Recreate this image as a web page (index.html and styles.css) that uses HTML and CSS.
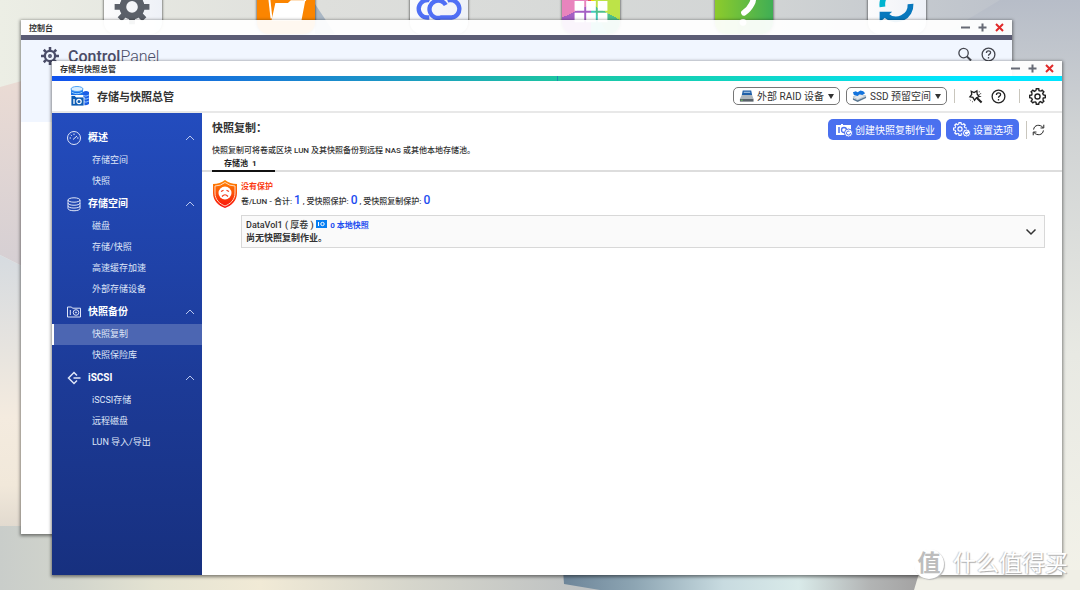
FILE: index.html
```html
<!DOCTYPE html>
<html lang="zh-CN">
<head>
<meta charset="utf-8">
<title>存储与快照总管</title>
<link rel="stylesheet" href="styles.css">
</head>
<body>
<svg class="defs" aria-hidden="true">
  <defs>
    <path id="tooth" d="M-2.1-8.3L-1.7-11H1.7L2.1-8.3A8.5 8.5 0 0 1 4.4-7.3"/>
    <g id="teeth4"><use href="#tooth"/><use href="#tooth" transform="rotate(45)"/><use href="#tooth" transform="rotate(90)"/><use href="#tooth" transform="rotate(135)"/></g>
    <symbol id="gear-line" viewBox="-12 -12 24 24"><use href="#teeth4"/><use href="#teeth4" transform="rotate(180)"/><circle r="3.6"/></symbol>
    <symbol id="gear-solid" viewBox="-12 -12 24 24">
      <circle r="6.8" stroke-width="3"/>
      <path stroke-width="3.4" d="M0-12V-8M0 12V8M-12 0H-8M12 0H8M-8.3-8.3L-5.500-5.500M8.3 8.3L5.500 5.500M-8.3 8.3L-5.500 5.500M8.3-8.3L5.500-5.500"/>
      <circle r="1.6" stroke-width="2"/>
    </symbol>
    <symbol id="help" viewBox="0 0 16 16"><circle cx="8" cy="8" r="6.8"/><path d="M5.8 6.3C5.8 3.4 10.3 3.5 10.2 6.1C10.1 7.7 8 7.6 8 9.4M8 10.6V12.2"/></symbol>
    <symbol id="chev-up" viewBox="0 0 10 6"><path d="M1 5L5 1L9 5"/></symbol>
    <symbol id="min" viewBox="0 0 9 9"><path d="M0 4.5H9"/></symbol>
    <symbol id="max" viewBox="0 0 9 9"><path d="M.5 4.5H8.5M4.5 .5V8.5"/></symbol>
    <symbol id="close" viewBox="0 0 9 9"><path d="M1 1L8 8M8 1L1 8"/></symbol>
    <linearGradient id="pink" x2="0" y2="1"><stop stop-color="#ecdcd4"/><stop offset="1" stop-color="#d2cdd3"/></linearGradient>
    <linearGradient id="cream" x2="0" y2="1"><stop stop-color="#d6dbe0"/><stop offset=".35" stop-color="#e7e4df"/><stop offset=".6" stop-color="#f4ebdf"/><stop offset=".85" stop-color="#f1e8da"/><stop offset="1" stop-color="#e2dacf"/></linearGradient>
    <linearGradient id="floor"><stop stop-color="#c9cdca"/><stop offset=".12" stop-color="#d2d5cc"/><stop offset=".25" stop-color="#e4e3d2"/><stop offset=".42" stop-color="#f1ead6"/><stop offset=".66" stop-color="#d6d6cc"/><stop offset="1" stop-color="#b9bdc0"/></linearGradient>
    <linearGradient id="glass"><stop stop-color="#6d8599"/><stop offset=".2" stop-color="#8da5b3"/><stop offset=".45" stop-color="#c8dbe0"/><stop offset=".66" stop-color="#d9eae9"/><stop offset=".86" stop-color="#b2b4b4"/><stop offset="1" stop-color="#a3a2a2"/></linearGradient>
    <linearGradient id="side" x2="0" y2="1"><stop stop-color="#b7bdc8"/><stop offset=".22" stop-color="#d0d3d4"/><stop offset=".6" stop-color="#e8e9e3"/><stop offset="1" stop-color="#f3f2e9"/></linearGradient>
    <linearGradient id="top"><stop stop-color="#eceee5"/><stop offset=".3" stop-color="#dedfdc"/><stop offset=".7" stop-color="#d2d5d5"/><stop offset="1" stop-color="#b7bdc8"/></linearGradient>
    <linearGradient id="shield" x2="0" y2="1"><stop stop-color="#ff8a00"/><stop offset="1" stop-color="#f90f0f"/></linearGradient>
  </defs>
</svg>

<main class="desktop">
  <svg class="wallpaper" viewBox="0 0 1080 590" preserveAspectRatio="none" aria-hidden="true">
    <rect width="1080" height="590" fill="url(#top)"/>
    <path fill="url(#side)" d="M1000 0H1080V590H900V60Z"/>
    <path fill="url(#pink)" d="M0 87L90 62V300L0 255Z"/>
    <path fill="url(#cream)" d="M0 255L90 300V526H0Z"/>
    <path fill="url(#floor)" d="M0 526H620V590H0Z"/>
    <path fill="#f0efe6" d="M900 570H1080V590H900Z"/>
    <path fill="url(#glass)" d="M563 570H920L914 590H600L564 584Z"/>
    <path fill="#a9b7c5" d="M315 4L335 34H315Z"/>
  </svg>

  <nav class="apps" aria-label="桌面">
    <a class="app app-light" href="#" aria-label="控制台"><svg viewBox="0 0 60 60"><g transform="translate(29 33)" fill="none" stroke="#5b6069"><circle r="9.500" stroke-width="7"/><path stroke-width="6" d="M0-18V-12M0 18V12M-18 0H-12M18 0H12M-12.700-12.700L-8-8M12.700 12.700L8 8M-12.700 12.700L-8 8M12.700-12.700L8-8"/></g></svg></a>
    <a class="app app-orange" href="#" aria-label="文件"><svg viewBox="0 0 60 60"><path fill="none" stroke="#fff" stroke-width="2" d="M12 18L15 45"/><path fill="#fff" d="M19 29H32L35 26H50L46 47H15Z"/><path fill="none" stroke="#fff" stroke-width="2" d="M22 22H48L50 27"/></svg></a>
    <a class="app app-light" href="#" aria-label="云"><svg viewBox="0 0 60 60"><path fill="none" stroke="#4f6ff5" stroke-width="4.500" d="M20 44H18A9 9 0 0 1 18 26C22 18 38 18 41 26A9 9 0 0 1 43 44H32A9 9 0 1 1 37 31"/></svg></a>
    <a class="app app-prism" href="#" aria-label="应用"><svg viewBox="0 0 60 60"><path fill="#fff" d="M13 15H23V25H13ZM25 15H35V25H25ZM37 15H47V25H37ZM13 27H23V37H13ZM25 27H35V37H25ZM37 27H47V37H37ZM13 39H23V49H13ZM25 39H35V49H25ZM37 39H47V49H37Z"/></svg></a>
    <a class="app app-green" href="#" aria-label="帮助"><svg viewBox="0 0 60 60"><path fill="none" stroke="#fff" stroke-width="6" stroke-linecap="round" d="M22 18C30 8 44 20 38 30Q35 36 30 39"/><circle cx="29" cy="49" r="3.500" fill="#fff"/></svg></a>
    <a class="app app-light" href="#" aria-label="同步"><svg viewBox="0 0 60 60"><path fill="none" stroke="#00b4d0" stroke-width="6" d="M15 33A15 15 0 0 1 38 18"/><path fill="none" stroke="#0878bd" stroke-width="6" d="M44 30A15 15 0 0 1 19 42"/><path fill="#0878bd" d="M12 38H25L12 49Z"/></svg></a>
  </nav>

  <section class="window window-back" aria-label="控制台">
    <header class="titlebar"><span>控制台</span>
      <div class="win-btns">
        <button type="button" aria-label="最小化"><svg><use href="#min"/></svg></button>
        <button type="button" aria-label="最大化"><svg><use href="#max"/></svg></button>
        <button type="button" class="x" aria-label="关闭"><svg><use href="#close"/></svg></button>
      </div>
    </header>
    <div class="strip strip-dark"></div>
    <div class="cp-head">
      <svg class="cp-gear"><use href="#gear-solid"/></svg>
      <h1 class="cp-title"><b>Control</b>Panel</h1>
      <button type="button" class="tool" aria-label="搜索"><svg viewBox="0 0 16 16"><circle cx="7" cy="6.500" r="5"/><path d="M10.500 10L15 14.500" stroke-width="2.200"/></svg></button>
      <button type="button" class="tool" aria-label="帮助"><svg><use href="#help"/></svg></button>
    </div>
  </section>

  <section class="window window-front" aria-label="存储与快照总管">
    <header class="titlebar"><span>存储与快照总管</span>
      <div class="win-btns">
        <button type="button" aria-label="最小化"><svg><use href="#min"/></svg></button>
        <button type="button" aria-label="最大化"><svg><use href="#max"/></svg></button>
        <button type="button" class="x" aria-label="关闭"><svg><use href="#close"/></svg></button>
      </div>
    </header>
    <div class="strip strip-a"><i class="tick"></i></div>
    <div class="app-head">
      <svg class="logo" viewBox="0 0 20 20" aria-hidden="true">
        <path fill="#1d5fe6" d="M13 6Q16 4 19 6V18Q16 20 13 19Z"/><path stroke="#8fc2ff" fill="none" d="M13 9.500Q16 11 19 9M13 12.500Q16 14 19 12M13 15.500Q16 17 19 15"/>
        <path fill="#1c73e8" d="M1 3V9H13V3Z"/><ellipse cx="7" cy="3" rx="6" ry="2.500" fill="#d8edff" stroke="#4da3f5"/><path d="M1.500 6Q7 9.500 12.500 6" fill="none" stroke="#8fd0ff"/>
        <path fill="#0c5cb4" stroke="#fff" stroke-width=".8" d="M1 11V9.500H5L6 11H14V20H1Z"/><path stroke="#fff" stroke-width="1.300" d="M4 13V18"/><circle cx="9" cy="15.500" r="2.200" fill="none" stroke="#fff" stroke-width="1.200"/>
      </svg>
      <h2 class="app-name">存储与快照总管</h2>
      <div class="drop">
        <svg viewBox="0 0 16 14" aria-hidden="true"><path fill="#1f5fa8" d="M4 1H13L14 6H3Z"/><path stroke="#c8dcf2" d="M5 3H12"/><path fill="#aeb6bd" d="M3 6H14L15.500 10H1Z"/><path fill="#59626a" d="M1 10H15.500V13H1Z"/><path stroke="#6fce5c" d="M2 11.500H4"/></svg>
        <select aria-label="外部 RAID 设备"><option>外部 RAID 设备</option></select>
      </div>
      <div class="drop">
        <svg viewBox="0 0 16 14" aria-hidden="true"><path fill="#e3e8ec" stroke="#98a5b0" stroke-width=".6" d="M1 8L9 5L15 7L6 11Z"/><path fill="#5b7892" d="M1 9L6 11.500L15 7.500V9L6 13.500L1 11Z"/><path fill="#1474dd" d="M1 3L4 2L6 3L9 1L12 2L14 4L11 6L8 5L6 7L2 6Z"/></svg>
        <select aria-label="SSD 预留空间"><option>SSD 预留空间</option></select>
      </div>
      <i class="vsep"></i>
      <button type="button" class="tool tool-wand" aria-label="向导"><svg viewBox="0 0 16 16"><path d="M3.500 2.500L6.500 3.800L9.500 2L9.800 5.500L12 8L9 9.300L7 12L5.200 9L2 8.300L4 5.700Z"/><path d="M9 9L14.500 14.500" stroke-width="2.200"/><path stroke-dasharray="1 2" stroke-width="1" d="M12 2.500V7M2 11.500L6 14.500M13.500 4.500V10"/></svg></button>
      <button type="button" class="tool" aria-label="帮助"><svg><use href="#help"/></svg></button>
      <i class="vsep vsep-wide"></i>
      <button type="button" class="tool tool-gear" aria-label="设置"><svg><use href="#gear-line"/></svg></button>
    </div>

    <div class="body">
      <nav class="sidebar" aria-label="导航">
        <button type="button" class="group"><svg viewBox="0 0 16 16"><circle cx="8" cy="8" r="6.500"/><path d="M7 9.500L11 6M3.500 8H5M8 3.500V5M4.800 4.800L5.800 5.800M11 8H12.500"/></svg><span>概述</span><svg class="up"><use href="#chev-up"/></svg></button>
        <a href="#">存储空间</a>
        <a href="#">快照</a>
        <button type="button" class="group"><svg viewBox="0 0 16 16"><ellipse cx="8" cy="4" rx="6" ry="2.200"/><path d="M2 4V12.500C2 15.500 14 15.500 14 12.500V4M2 7C2 10 14 10 14 7M2 9.800C2 12.800 14 12.800 14 9.800"/></svg><span>存储空间</span><svg class="up"><use href="#chev-up"/></svg></button>
        <a href="#">磁盘</a>
        <a href="#">存储/快照</a>
        <a href="#">高速缓存加速</a>
        <a href="#">外部存储设备</a>
        <button type="button" class="group"><svg viewBox="0 0 16 16"><path d="M1.500 3H5.500L6.500 4.200H14.500V13H1.500ZM4.300 6V11"/><circle cx="10" cy="8.500" r="2.800"/><circle cx="10" cy="8.500" r=".6"/></svg><span>快照备份</span><svg class="up"><use href="#chev-up"/></svg></button>
        <a href="#" class="active" aria-current="page">快照复制</a>
        <a href="#">快照保险库</a>
        <button type="button" class="group"><svg viewBox="0 0 16 16"><path stroke-width="1.500" d="M11 5.500L8 2.500L2.500 8L8 13.500L11 10.500M7.500 8H14.500"/></svg><span>iSCSI</span><svg class="up"><use href="#chev-up"/></svg></button>
        <a href="#">iSCSI存储</a>
        <a href="#">远程磁盘</a>
        <a href="#">LUN 导入/导出</a>
      </nav>

      <div class="content">
        <div class="bar">
          <h3 class="heading">快照复制：</h3>
          <button type="button" class="primary"><svg viewBox="0 0 18 16"><path fill="#fff" d="M1 3H6V2H8V3H16V13H1Z"/><path stroke="#4a70ef" stroke-width="1.500" d="M4 5V11"/><circle cx="9" cy="8" r="2.500" fill="none" stroke="#4a70ef" stroke-width="1.300"/><circle cx="13.500" cy="11" r="4" fill="#fff" stroke="#4a70ef"/><path fill="none" stroke="#4a70ef" d="M15.500 11A2 2 0 1 1 14.500 9.300"/></svg>创建快照复制作业</button>
          <button type="button" class="primary"><svg viewBox="0 0 18 16"><use href="#gear-line" x="0" y="0" width="14" height="14" fill="none" stroke="#fff" stroke-width="2"/><circle cx="13.500" cy="11" r="4" fill="#fff" stroke="#4a70ef"/><path fill="none" stroke="#4a70ef" d="M15.500 11A2 2 0 1 1 14.500 9.300"/></svg>设置选项</button>
          <i class="vsep"></i>
          <button type="button" class="tool tool-refresh" aria-label="刷新"><svg viewBox="0 0 16 16"><path d="M2 7.500C2.500 1.500 10 .5 13.500 5M14.500 1.500V5.500H10.500M14 8.500C13.500 14.500 6 15.500 2.500 11M1.500 14.500V10.500H5.500"/></svg></button>
        </div>
        <p class="desc">快照复制可将卷或区块 LUN 及其快照备份到远程 NAS 或其他本地存储池。</p>
        <div class="tabs" role="tablist"><button type="button" class="tab" role="tab" aria-selected="true">存储池&nbsp; 1</button></div>
        <div class="pool">
          <svg class="shield" viewBox="0 0 26 28" aria-hidden="true"><path fill="url(#shield)" d="M13 0Q18 4 25 4V13C25 21 19 26 13 28C7 26 1 21 1 13V4Q8 4 13 0Z"/><path fill="none" stroke="#ffd9c0" d="M13 2.500Q17.500 6 23 6V13C23 20 18 24 13 26C8 24 3 20 3 13V6Q8.500 6 13 2.500Z"/><circle cx="13" cy="13" r="6.500" fill="#fff"/><path fill="none" stroke="#f33b1a" stroke-width="1.200" d="M9 11.500L11.500 10.300M17 11.500L14.500 10.300M10 16.500Q13 13 16 16.500"/></svg>
          <div class="pool-main">
            <strong class="warn">没有保护</strong>
            <p class="stats">卷/LUN - 合计: <b>1</b> , 受快照保护: <b>0</b> , 受快照复制保护: <b>0</b></p>
            <article class="volume">
              <div class="vol-text">
                <p class="vol-name">DataVol1 ( 厚卷 ) <svg viewBox="0 0 11 8"><path fill="#087ff2" d="M0 0H11V8H0Z"/><path stroke="#fff" d="M2.500 2V6"/><circle cx="6.500" cy="4" r="1.700" fill="none" stroke="#fff"/></svg> <a href="#">0 本地快照</a></p>
                <p class="vol-state">尚无快照复制作业。</p>
              </div>
              <button type="button" class="expand" aria-label="展开"><svg viewBox="0 0 12 8"><path d="M1.500 1.500L6 6L10.500 1.500"/></svg></button>
            </article>
          </div>
        </div>
      </div>
    </div>
  </section>

  <div class="mark"><span class="mark-badge">值</span><span>什么值得买</span></div>
</main>
</body>
</html>
```
FILE: styles.css
```css
* { box-sizing: border-box; }
body, h1, h2, h3, p { margin: 0; }
body {
  font-family: Roboto, "Noto Sans CJK SC", sans-serif;
  font-size: 9px;
  color: #333;
}
button, select {
  font: inherit;
  color: inherit;
  background: none;
  border: 0;
  padding: 0;
}
a { color: inherit; text-decoration: none; }
svg { display: block; flex: none; }
.defs { position: absolute; width: 0; height: 0; }

.desktop { position: relative; height: 100vh; overflow: hidden; }
.wallpaper { position: absolute; width: 100%; height: 100%; }

.apps {
  position: absolute;
  top: -26px;
  left: 0;
  right: 0;
  display: flex;
  justify-content: space-between;
  padding: 0 154px 0 104px;
}
.app {
  width: 58px;
  height: 60px;
  border-radius: 12px;
  overflow: hidden;
  box-shadow: 0 0 2px 1px rgba(0, 0, 0, .4);
}
.app svg { width: 58px; height: 60px; }
.app-light { background: linear-gradient(90deg, #fbfbfc, #eef1f7); }
.app-orange { background: #fb8500; }
.app-prism { background: conic-gradient(#f0d800 12%, #bde348 12% 33%, #4fbf8c 33% 42%, #3fcabb 42% 50%, #a45fc4 50% 68%, #e884bd 68% 88%, #e8535a 88%); }
.app-green { background: linear-gradient(90deg, #8dcb2b, #3fae55); }

.window {
  position: absolute;
  display: flex;
  flex-direction: column;
  box-shadow: 0 1px 3px 1px rgba(0, 0, 0, .45);
}
.window-back { inset: 20px 68px 56px 21px; }
.window-front { inset: 61px 18px 15px 52px; }
.titlebar {
  display: flex;
  align-items: center;
  justify-content: space-between;
  height: 15px;
  padding: 0 7px 0 8px;
  background: rgba(255, 255, 255, .94);
  font-size: 8px;
  font-weight: 700;
}
.win-btns { display: flex; gap: 7px; }
.win-btns button { width: 10px; height: 10px; }
.win-btns svg { width: 9px; height: 9px; stroke: #666a75; stroke-width: 2; fill: none; }
.win-btns .x svg { stroke: #e02a2a; }
.strip { height: 5px; }
.strip-dark { background: #5b5c74; }
.strip-a {
  display: flex;
  justify-content: center;
  background: linear-gradient(90deg, #1052ee, #1c96c6 33%, #1cc5a2 50%, #12d3bd 66%, #00e5ff 90%);
}
.tick { width: 1px; background: #1c8fae; }

.window-back { background: linear-gradient(transparent 15px, #fff 15px); }
.cp-head {
  display: flex;
  align-items: flex-start;
  height: 82px;
  padding: 7px 16px 0 20px;
  background: #f1f6ff;
  gap: 9px;
}
.cp-gear { width: 18px; height: 18px; fill: none; stroke: #4b4d68; }
.cp-title { flex: 1; font-size: 16px; line-height: 20px; font-weight: 300; color: #4b4d68; }
.cp-title b { font-weight: 500; }

.tool { display: flex; color: #222; }
.tool svg { width: 15px; height: 15px; fill: none; stroke: currentColor; stroke-width: 1.4; }
.cp-head .tool { color: #44464f; }

.app-head {
  display: flex;
  align-items: center;
  height: 32px;
  padding: 0 16px 0 18px;
  background: #fff;
  border-bottom: 2px solid #e8e8e8;
}
.logo { width: 20px; height: 20px; }
.app-name { flex: 1; margin-left: 7px; font-size: 11px; font-weight: 700; }
.drop {
  position: relative;
  display: flex;
  align-items: center;
  height: 18px;
  padding: 0 4px 0 5px;
  margin-right: 6px;
  border: 1px solid #777;
  border-radius: 5px;
  font-size: 10px;
}
.drop svg { width: 15px; height: 14px; }
.drop select { appearance: none; padding: 0 11px 0 3px; height: 16px; outline: 0; }
.drop::after {
  content: "";
  position: absolute;
  right: 5px;
  top: 6px;
  border: 3px solid transparent;
  border-top: 5px solid #333;
  pointer-events: none;
}
.vsep { width: 1px; height: 14px; background: #c9c6bd; }
.app-head .vsep { margin: 0 13px 0 1px; }
.app-head .vsep-wide { margin: 0 9px 0 13px; }
.tool-wand { margin-right: 8px; }
.app-head .tool-gear svg { width: 17px; height: 17px; stroke-width: 2; }

.body { flex: 1; display: flex; min-height: 0; background: #fff; }
.sidebar {
  width: 150px;
  padding-top: 13px;
  display: flex;
  flex-direction: column;
  background: linear-gradient(#234cbe, #1c3a96 60%, #17307f);
  color: #dfe6f8;
}
.group {
  display: flex;
  align-items: center;
  height: 24px;
  padding: 0 7px 0 14px;
  font-size: 10px;
  line-height: 14px;
  font-weight: 700;
  color: #fff;
  text-align: left;
}
.group svg { width: 16px; height: 16px; fill: none; stroke: #dfe6f8; }
.group span { flex: 1; margin-left: 6px; }
.group .up { width: 10px; height: 6px; stroke: #b9c7ee; }
.sidebar a { height: 21px; line-height: 21px; padding-left: 40px; }
.sidebar .active { background: #4c66b2; border-left: 2px solid #fff; padding-left: 38px; }

.content { flex: 1; min-width: 0; }
.bar { display: flex; align-items: center; padding: 6px 17px 0 10px; }
.heading { flex: 1; align-self: flex-start; font-size: 11px; line-height: 19px; font-weight: 700; }
.primary {
  display: flex;
  align-items: center;
  gap: 2px;
  height: 21px;
  padding: 0 6px 0 7px;
  margin-right: 5px;
  border-radius: 5px;
  background: #4a70ef;
  color: #fff;
  font-size: 10px;
}
.primary svg { width: 18px; height: 16px; }
.bar .vsep { height: 18px; margin: 0 5px 0 2px; }
.tool-refresh svg { width: 13px; height: 14px; stroke-width: 1.2; }
.desc { padding: 4px 10px 0; font-size: 8px; line-height: 14px; font-weight: 500; }
.tabs { display: flex; padding-left: 10px; border-bottom: 2px solid #ddd; }
.tab {
  height: 14px;
  padding: 0 18px 0 12px;
  margin-bottom: -2px;
  border-bottom: 2px solid #111;
  font-size: 8px;
  line-height: 12px;
  font-weight: 700;
  color: #222;
}
.pool { display: flex; padding: 8px 17px 0 10px; gap: 3px; }
.shield { width: 26px; height: 28px; }
.pool-main { flex: 1; }
.warn { display: block; font-size: 8px; line-height: 14px; color: #fb3a12; }
.stats { font-size: 8px; line-height: 12px; font-weight: 500; }
.stats b { font-size: 12px; font-weight: 500; color: #1d4df0; }
.volume {
  display: flex;
  align-items: center;
  justify-content: space-between;
  margin-top: 7px;
  padding: 3px 7px 2px 4px;
  border: 1px solid #d8d8d8;
  background: #fafafa;
}
.vol-name { font-size: 9px; line-height: 13px; font-weight: 500; }
.vol-name svg { display: inline-block; width: 11px; height: 8px; }
.vol-name a { margin-left: 1px; color: #1d4df0; font-size: 8px; font-weight: 700; }
.vol-state { font-size: 9px; line-height: 13px; font-weight: 700; }
.expand svg { width: 12px; height: 8px; fill: none; stroke: #333; stroke-width: 1.5; }

.mark {
  position: absolute;
  right: 12px;
  bottom: 11px;
  display: flex;
  align-items: center;
  gap: 9px;
  font-size: 23px;
  line-height: 30px;
  color: #fff;
  text-shadow: 1px 1px 1px #aaa, -1px 0 1px #ccc;
}
.mark-badge {
  width: 30px;
  height: 30px;
  border-radius: 50%;
  background: #fff;
  box-shadow: 1px 1px 1px #bbb;
  color: #bdbdbd;
  font-weight: 700;
  text-align: center;
  text-shadow: none;
}
```
